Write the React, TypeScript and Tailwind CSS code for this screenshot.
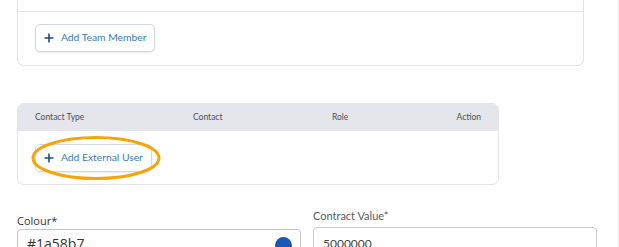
import React from "react";

function Plus() {
  return (
    <svg width="10" height="10" viewBox="0 0 10 10" className="shrink-0">
      <path d="M5 0.5v9M0.5 5h9" stroke="#1f4a85" strokeWidth="1.6" fill="none" />
    </svg>
  );
}

function AddButton({ label }: { label: string }) {
  return (
    <button className="flex h-[28px] items-center gap-[7px] rounded-[5px] border border-[#d3d7e2] bg-white pl-[8px] pr-[8px] text-[10.3px] text-[#3a78c2] shadow-[0_1px_2px_rgba(0,0,0,0.08)]">
      <Plus />
      <span>{label}</span>
    </button>
  );
}

export default function App() {
  return (
    <div className="flex h-[247px] w-[619px] overflow-hidden bg-white" style={{ fontFamily: "Lato, 'Noto Sans', sans-serif" }}>
      <main className="flex-1 pl-[17px]">
        {/* team members card */}
        <div className="w-[567px] rounded-b-[7px] border-x border-b border-[#e3e3ea]">
          <div className="h-[12px] border-b border-[#e3e3ea]" />
          <div className="px-[17px] pb-[13px] pt-[12px]">
            <AddButton label="Add Team Member" />
          </div>
        </div>

        {/* external users table */}
        <div className="mt-[37px] w-[482px] overflow-hidden rounded-[7px] border border-[#e3e3ea]">
          <div className="flex h-[27px] items-center bg-[#e4e6eb] px-[17px] text-[8.5px] text-[#4a5060]">
            <span className="w-[158px]">Contact Type</span>
            <span className="w-[139px]">Contact</span>
            <span className="flex-1">Role</span>
            <span>Action</span>
          </div>
          <div className="relative px-[17px] pb-[12px] pt-[13px]">
            <AddButton label="Add External User" />
            <svg className="pointer-events-none absolute left-[13px] top-[5px]" width="132" height="46" viewBox="0 0 132 46">
              <ellipse cx="65" cy="22" rx="63" ry="20.5" fill="none" stroke="#f5a40a" strokeWidth="3" />
            </svg>
          </div>
        </div>

        {/* form fields */}
        <div className="mt-[24px] flex gap-[12px]">
          <div className="w-[284px] pt-[5px]">
            <label className="block text-[11px] leading-[14px] text-[#333]" style={{ fontFamily: "'Open Sans', sans-serif" }}>
              Colour*
            </label>
            <div className="mt-[1px] flex h-[40px] items-start justify-between rounded-t-[4px] border border-[#c4c4c4] pl-[9px] pr-[8px] pt-[4px]">
              <span className="text-[14px] leading-[20px] text-[#333]" style={{ fontFamily: "'Open Sans', sans-serif" }}>#1a58b7</span>
              <span className="mt-[3px] h-[17px] w-[17px] rounded-full bg-[#1a58b7]" />
            </div>
          </div>
          <div className="w-[284px]">
            <label className="block text-[11px] leading-[14px] text-[#555a64]">Contract Value*</label>
            <div className="mt-[4px] flex h-[40px] items-start rounded-t-[4px] border border-[#c9ccd3] pl-[9px] pt-[8px]">
              <span className="text-[12px] leading-[16px] text-[#444]">5000000</span>
            </div>
          </div>
        </div>
      </main>
      <div className="w-[2px] bg-[#f4f4f7]" />
    </div>
  );
}
